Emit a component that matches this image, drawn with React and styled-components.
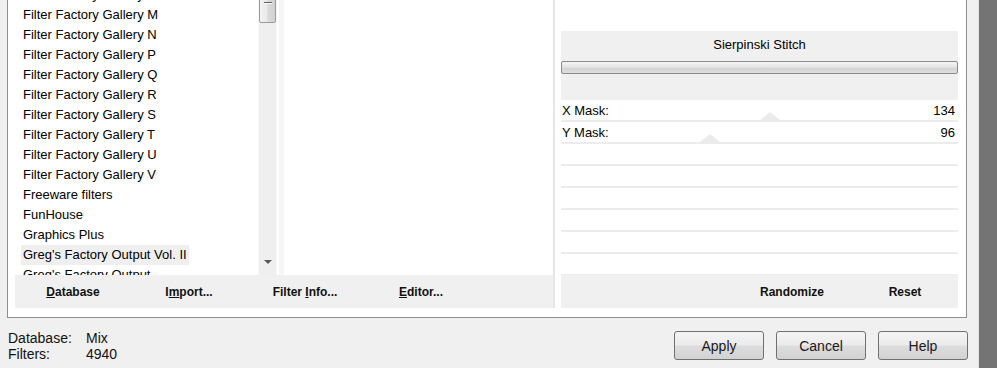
import React from 'react';
import styled, { createGlobalStyle } from 'styled-components';

const Global = createGlobalStyle`
  html, body { margin: 0; padding: 0; background: #f0f0f0; }
  body { font-family: "Liberation Sans", Arial, sans-serif; color: #000; overflow: hidden; }
  #root { width: 997px; height: 368px; }
`;

const Screen = styled.div`
  display: flex;
  width: 997px;
  height: 368px;
  overflow: hidden;
`;

const Dialog = styled.div`
  width: 978px;
  flex: none;
  display: flex;
  flex-direction: column;
  background: #f0f0f0;
`;

const DarkStrip = styled.div`
  flex: 1;
  background: #747474;
  border-left: 1px solid #e4e4e4;
`;

const Panel = styled.div`
  margin-left: 7px;
  width: 960px;
  height: 318px;
  box-sizing: border-box;
  background: #fff;
  border: 1px solid #8e8e8e;
  border-top: none;
  display: grid;
  grid-template-columns: 7px 538px 2px 6px 397px 1fr;
  grid-template-rows: 275px 33px 1fr;
  grid-template-areas:
    ". browse sep . params ."
    ". ltb sep . rtb .";
`;

const Browse = styled.div`
  grid-area: browse;
  display: flex;
  overflow: hidden;
`;

const List = styled.ul`
  width: 243px;
  flex: none;
  margin: -15px 0 0;
  padding: 0 0 0 6px;
  box-sizing: border-box;
  list-style: none;
`;

const Item = styled.li`
  height: 20px;
  line-height: 20px;
  font-size: 13px;
  white-space: nowrap;
`;

const ItemLabel = styled.span`
  display: inline-block;
  padding: 0 2px;
  background: ${p => (p.$selected ? '#efefef' : 'transparent')};
`;

const Scrollbar = styled.div`
  width: 19px;
  flex: none;
  box-sizing: border-box;
  background: #efefef;
  border-left: 1px solid #f6f6f6;
  border-right: 1px solid #f8f8f8;
  display: flex;
  flex-direction: column;
  justify-content: space-between;
  align-items: center;
`;

const Thumb = styled.div`
  width: 17px;
  height: 35px;
  margin-top: -12px;
  box-sizing: border-box;
  border: 1px solid #9b9b9b;
  border-radius: 2px;
  background: linear-gradient(to right, #f3f3f3 0%, #e9e9e9 45%, #d9d9d9 55%, #d2d2d2 100%);
  display: flex;
  justify-content: center;
  padding-top: 13px;
`;

const Grip = styled.div`
  width: 8px;
  height: 1px;
  background: #606060;
  box-shadow: 0 1px 0 #fafafa;
`;

const ArrowButton = styled.div`
  height: 17px;
  margin-bottom: 5px;
  display: flex;
  align-items: center;
  justify-content: center;
`;

const ArrowDown = styled.div`
  width: 0;
  height: 0;
  border-left: 4px solid transparent;
  border-right: 4px solid transparent;
  border-top: 4px solid #5a5a5a;
`;

const Gutter = styled.div`
  width: 7px;
  flex: none;
  box-sizing: border-box;
  border-left: 2px solid #fff;
  background: #f6f6f6;
`;

const Preview = styled.div`
  flex: 1;
  background: #fff;
`;

const Separator = styled.div`
  grid-area: sep;
  background: #e6e6e6;
`;

const Params = styled.div`
  grid-area: params;
  display: flex;
  flex-direction: column;
  padding-top: 31px;
  overflow: hidden;
`;

const Header = styled.div`
  height: 69px;
  flex: none;
  background: #f0f0f0;
  display: flex;
  flex-direction: column;
`;

const Title = styled.div`
  height: 28px;
  line-height: 28px;
  text-align: center;
  font-size: 13px;
`;

const Bar = styled.div`
  margin-top: 2px;
  height: 13px;
  box-sizing: border-box;
  border: 1px solid #8a8a8a;
  border-radius: 2px;
  background: linear-gradient(to bottom, #f4f4f4 0%, #e6e6e6 45%, #d4d4d4 60%, #dedede 100%);
`;

const Row = styled.div`
  position: relative;
  height: 22px;
  flex: none;
  box-sizing: border-box;
  border-bottom: 2px solid #ececec;
  display: flex;
  justify-content: space-between;
  align-items: center;
  padding: 0 3px 0 1px;
  font-size: 13px;
`;

const RowText = styled.span`
  position: relative;
  z-index: 1;
`;

const SliderThumb = styled.div`
  position: absolute;
  bottom: 0;
  width: 0;
  height: 0;
  margin-left: -10px;
  border-left: 10px solid transparent;
  border-right: 10px solid transparent;
  border-bottom: 8px solid #ebebeb;
`;

const Toolbar = styled.div`
  grid-area: ${p => p.$area};
  background: #f0f0f0;
  display: flex;
  align-items: center;
  padding-left: ${p => p.$pad || 0}px;
`;

const ToolButton = styled.div`
  width: ${p => p.$w}px;
  margin-right: ${p => p.$gap || 0}px;
  text-align: center;
  font-size: 12px;
  font-weight: bold;
  color: #111;
  white-space: nowrap;
  u { text-decoration: underline; }
`;

const Footer = styled.div`
  display: flex;
  justify-content: space-between;
  padding: 12px 10px 0 8px;
`;

const Status = styled.div`
  display: grid;
  grid-template-columns: 78px auto;
  font-size: 14px;
  line-height: 16px;
  color: #111;
`;

const Buttons = styled.div`
  display: flex;
  gap: 12px;
  margin-top: 1px;
`;

const Button = styled.button`
  width: 90px;
  height: 29px;
  box-sizing: border-box;
  border: 1px solid #707070;
  border-radius: 3px;
  background: linear-gradient(to bottom, #f4f4f4 0%, #ebebeb 48%, #dddddd 52%, #d2d2d2 100%);
  font-family: "Liberation Sans", Arial, sans-serif;
  font-size: 14px;
  color: #1a1a1a;
  padding: 0;
`;

const filters = [
  'Filter Factory Gallery L',
  'Filter Factory Gallery M',
  'Filter Factory Gallery N',
  'Filter Factory Gallery P',
  'Filter Factory Gallery Q',
  'Filter Factory Gallery R',
  'Filter Factory Gallery S',
  'Filter Factory Gallery T',
  'Filter Factory Gallery U',
  'Filter Factory Gallery V',
  'Freeware filters',
  'FunHouse',
  'Graphics Plus',
  "Greg's Factory Output Vol. II",
  "Greg's Factory Output",
];

const params = [
  { label: 'X Mask:', value: 134 },
  { label: 'Y Mask:', value: 96 },
];

export default function App() {
  const emptyRows = 6;
  return (
    <Screen>
      <Global />
      <Dialog>
        <Panel>
          <Browse>
            <List>
              {filters.map(f => (
                <Item key={f}>
                  <ItemLabel $selected={f === "Greg's Factory Output Vol. II"}>{f}</ItemLabel>
                </Item>
              ))}
            </List>
            <Scrollbar>
              <Thumb>
                <Grip />
              </Thumb>
              <ArrowButton>
                <ArrowDown />
              </ArrowButton>
            </Scrollbar>
            <Gutter />
            <Preview />
          </Browse>
          <Separator />
          <Params>
            <Header>
              <Title>Sierpinski Stitch</Title>
              <Bar />
            </Header>
            {params.map(p => (
              <Row key={p.label}>
                <SliderThumb style={{ left: `${(p.value / 255) * 100}%` }} />
                <RowText>{p.label}</RowText>
                <RowText>{p.value}</RowText>
              </Row>
            ))}
            {Array.from({ length: emptyRows }).map((_, i) => (
              <Row key={i} />
            ))}
          </Params>
          <Toolbar $area="ltb">
            <ToolButton $w={116}><u>D</u>atabase</ToolButton>
            <ToolButton $w={116}>I<u>m</u>port...</ToolButton>
            <ToolButton $w={116}>Filter <u>I</u>nfo...</ToolButton>
            <ToolButton $w={116}><u>E</u>ditor...</ToolButton>
          </Toolbar>
          <Toolbar $area="rtb" $pad={181}>
            <ToolButton $w={100} $gap={13}>Randomize</ToolButton>
            <ToolButton $w={100}>Reset</ToolButton>
          </Toolbar>
        </Panel>
        <Footer>
          <Status>
            <span>Database:</span>
            <span>Mix</span>
            <span>Filters:</span>
            <span>4940</span>
          </Status>
          <Buttons>
            <Button>Apply</Button>
            <Button>Cancel</Button>
            <Button>Help</Button>
          </Buttons>
        </Footer>
      </Dialog>
      <DarkStrip />
    </Screen>
  );
}
